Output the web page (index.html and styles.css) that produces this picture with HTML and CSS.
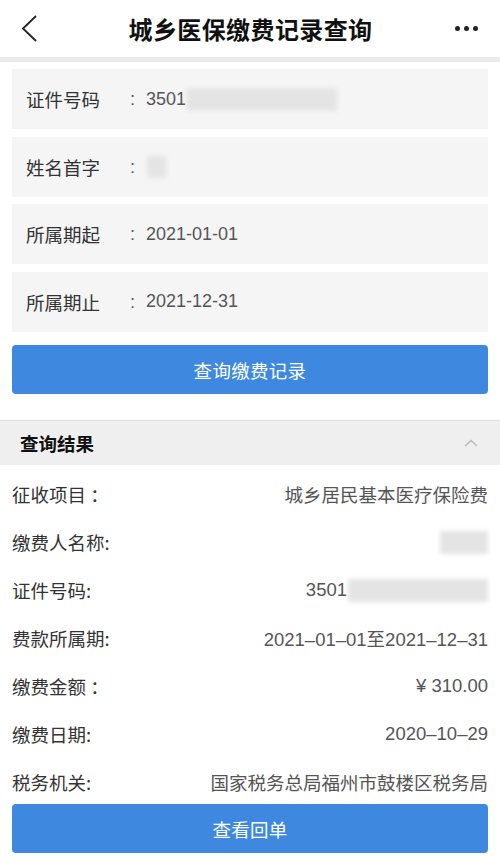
FILE: index.html
```html
<!DOCTYPE html>
<html lang="zh-CN">
<head>
    <meta charset="UTF-8">
    <meta name="viewport" content="width=device-width, initial-scale=1.0">
    <title>城乡医保缴费记录查询</title>
    <link rel="stylesheet" href="styles.css">
</head>
<body>
    <div class="header">
        <svg class="back" width="20" height="30" viewBox="0 0 20 30">
            <polyline points="16,2 3,14.5 16,27" fill="none" stroke="#222" stroke-width="1.8"/>
        </svg>
        <h1>城乡医保缴费记录查询</h1>
        <div class="more"><span></span><span></span><span></span></div>
    </div>

    <div class="form">
        <div class="field">
            <span class="label">证件号码</span>
            <span class="colon">:</span>
            <span class="value">3501</span>
            <span class="mask mask-id"></span>
        </div>
        <div class="field">
            <span class="label">姓名首字</span>
            <span class="colon">:</span>
            <span class="mask mask-name"></span>
        </div>
        <div class="field">
            <span class="label">所属期起</span>
            <span class="colon">:</span>
            <span class="value">2021-01-01</span>
        </div>
        <div class="field">
            <span class="label">所属期止</span>
            <span class="colon">:</span>
            <span class="value">2021-12-31</span>
        </div>
        <button class="btn">查询缴费记录</button>
    </div>

    <div class="result-head">
        <span>查询结果</span>
        <svg width="14" height="8" viewBox="0 0 14 8">
            <polyline points="1,7 7,1.5 13,7" fill="none" stroke="#bbb" stroke-width="1.5"/>
        </svg>
    </div>

    <div class="results">
        <div class="row"><span>征收项目 ：</span><span class="val">城乡居民基本医疗保险费</span></div>
        <div class="row"><span>缴费人名称:</span><span class="mask mask-payer"></span></div>
        <div class="row"><span>证件号码:</span><span class="val val-id">3501<span class="mask mask-rid"></span></span></div>
        <div class="row"><span>费款所属期:</span><span class="val">2021–01–01至2021–12–31</span></div>
        <div class="row"><span>缴费金额 ：</span><span class="val">¥ 310.00</span></div>
        <div class="row"><span>缴费日期:</span><span class="val">2020–10–29</span></div>
        <div class="row"><span>税务机关:</span><span class="val">国家税务总局福州市鼓楼区税务局</span></div>
        <button class="btn">查看回单</button>
    </div>
</body>
</html>
```

FILE: styles.css
```css
body {
    margin: 0;
    background: #fff;
    font-family: "Liberation Sans", "Noto Sans CJK SC", sans-serif;
    color: #333;
}
.header {
    height: 57px;
    display: flex;
    align-items: center;
    justify-content: space-between;
    padding: 0 20px 0 20px;
    border-bottom: 5px solid #ececec;
}
.header h1 {
    margin: 0;
    font-size: 24px;
    font-weight: bold;
    color: #111;
    font-family: "Noto Sans CJK SC", sans-serif;
    letter-spacing: 0.4px;
    padding-left: 6px;
}
.back {
    display: block;
    margin-top: 1px;
}
.more {
    display: flex;
    gap: 4px;
    padding-right: 2px;
}
.more span {
    width: 5px;
    height: 5px;
    border-radius: 50%;
    background: #222;
}
.form {
    padding: 7px 12px 0;
    display: flex;
    flex-direction: column;
    gap: 7.5px;
}
.field {
    height: 60px;
    background: #f5f5f5;
    display: flex;
    align-items: center;
    padding-left: 14px;
    font-size: 18.5px;
}
.label {
    width: 104px;
    color: #333;
    font-family: "Noto Sans CJK SC", sans-serif;
}
.colon {
    color: #555;
    width: 16px;
}
.value {
    color: #555;
    font-size: 18px;
}
.mask {
    display: inline-block;
    background: #e4e4e4;
    filter: blur(2px);
}
.mask-id {
    width: 150px;
    height: 23px;
    margin-left: 1px;
}
.mask-name {
    width: 19px;
    height: 22px;
    margin-left: 1px;
}
.btn {
    display: block;
    width: 100%;
    height: 49px;
    border: none;
    border-radius: 4px;
    background: #3e89df;
    color: #fff;
    font-size: 18.5px;
    font-family: "Noto Sans CJK SC", sans-serif;
    letter-spacing: 0.3px;
}
.form .btn {
    margin-top: 6px;
}
.result-head {
    margin-top: 26px;
    height: 44px;
    border-top: 1px solid #dedede;
    background: #efefef;
    display: flex;
    align-items: center;
    justify-content: space-between;
    padding: 0 22px 0 20px;
    font-size: 18.5px;
    font-weight: bold;
    color: #111;
    font-family: "Noto Sans CJK SC", sans-serif;
}
.results {
    padding: 5px 12px 0;
}
.results .btn {
    margin-top: -2px;
}
.row {
    height: 48px;
    display: flex;
    align-items: center;
    justify-content: space-between;
    font-size: 18.5px;
    font-family: "Noto Sans CJK SC", sans-serif;
}
.val {
    color: #555;
    font-family: "Liberation Sans", "Noto Sans CJK SC", sans-serif;
    display: flex;
    align-items: center;
}
.mask-payer {
    width: 48px;
    height: 23px;
}
.mask-rid {
    width: 140px;
    height: 23px;
    margin-left: 1px;
}
```
